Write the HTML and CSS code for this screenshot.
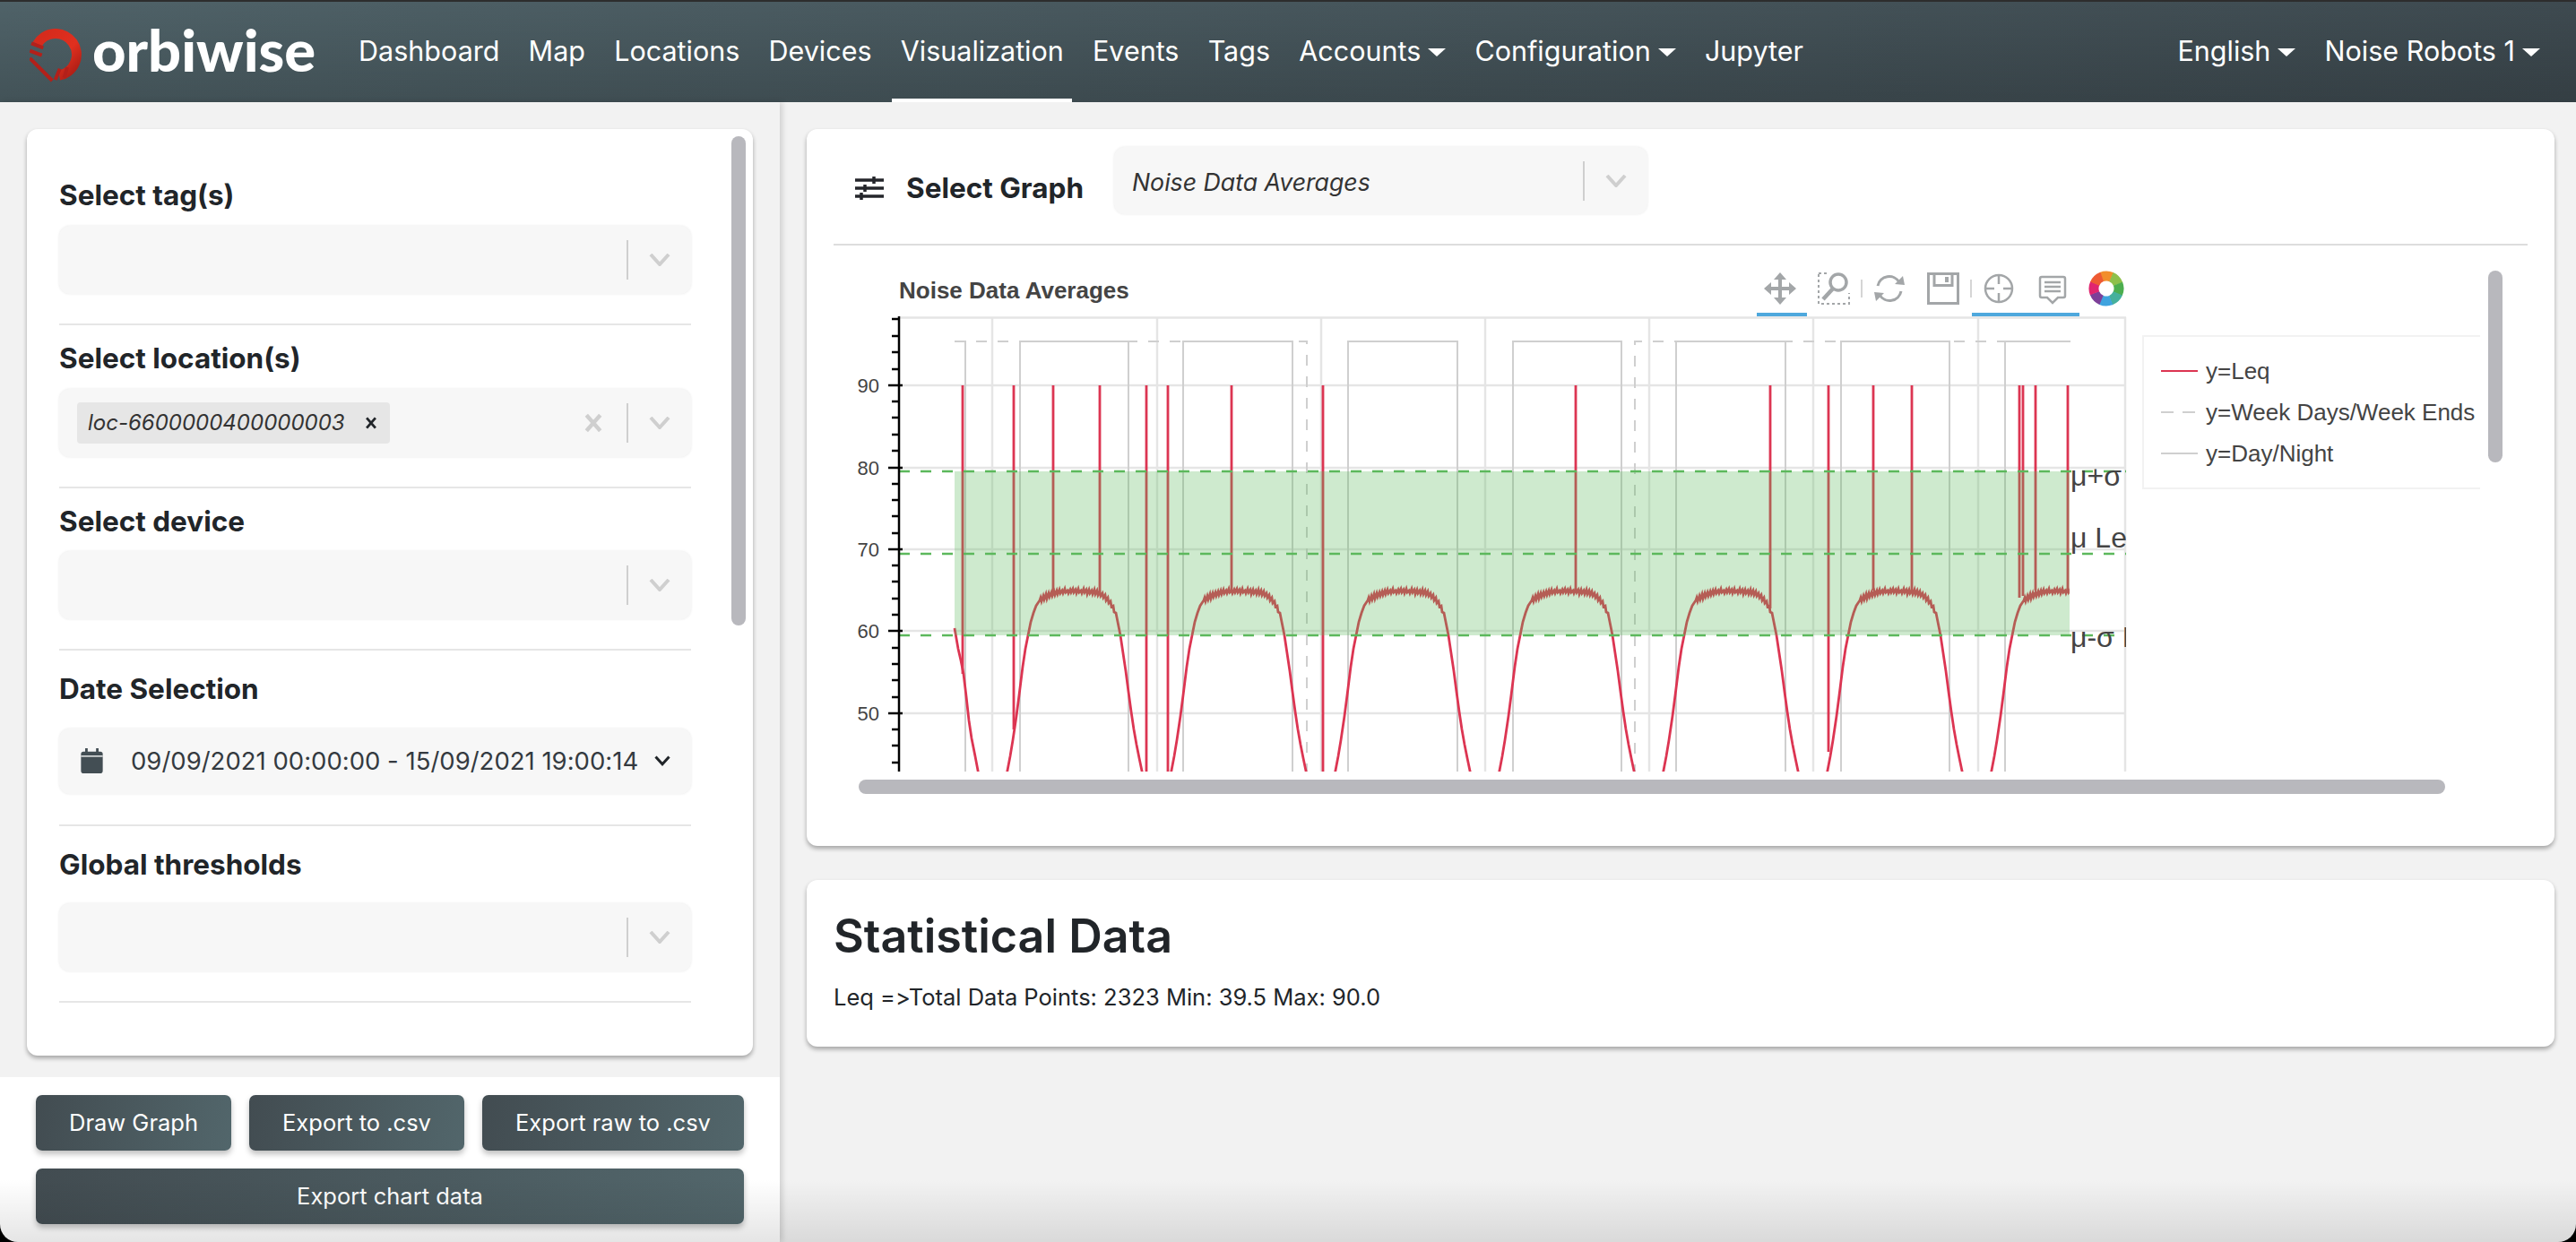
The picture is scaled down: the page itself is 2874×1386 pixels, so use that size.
FILE: index.html
```html
<!DOCTYPE html>
<html>
<head lang="en">
    <meta charset="UTF-8">
    <title>orbiwise - Visualization</title>
    <link rel="stylesheet" href="styles.css">
</head>
<body>
    <svg class="defs">
        <symbol id="chev" viewBox="0 0 24 14"><path d="M2 1 L12 12 L22 1" fill="none" stroke="currentColor" stroke-width="4"/></symbol>
        <symbol id="cross" viewBox="0 0 20 20"><path d="M3 2 L17 18 M17 2 L3 18" fill="none" stroke="currentColor" stroke-width="4"/></symbol>
    </svg>

    <nav class="navbar">
        <a class="brand" href="#">
            <svg class="brand-ring" viewBox="0 0 60 60">
                <defs>
                    <linearGradient id="ringFill" x1="0" y1="0" x2="1" y2="1">
                        <stop offset="0" stop-color="#d42a1c"/>
                        <stop offset=".6" stop-color="#e0301f"/>
                        <stop offset="1" stop-color="#a81c14"/>
                    </linearGradient>
                </defs>
                <path d="M8.600 17.200A23.500 23.500 0 1 1 33.100 52.100" fill="none" stroke="url(#ringFill)" stroke-width="11"/>
                <path d="M2 16.300L15.300 21.300M.3 24.700L13.700 29.700M.3 33L25.300 58M28.700 57L33.700 44.700M38.700 54.700L42 43" fill="none" stroke="#b3201a" stroke-width="4"/>
            </svg>
            <span class="brand-name">orbiwise</span>
        </a>
        <ul class="nav-list">
            <li class="nav-item"><a href="#">Dashboard</a></li>
            <li class="nav-item"><a href="#">Map</a></li>
            <li class="nav-item"><a href="#">Locations</a></li>
            <li class="nav-item"><a href="#">Devices</a></li>
            <li class="nav-item active"><a href="#">Visualization</a></li>
            <li class="nav-item"><a href="#">Events</a></li>
            <li class="nav-item"><a href="#">Tags</a></li>
            <li class="nav-item"><a class="caret" href="#">Accounts</a></li>
            <li class="nav-item"><a class="caret" href="#">Configuration</a></li>
            <li class="nav-item"><a href="#">Jupyter</a></li>
        </ul>
        <ul class="nav-list nav-right">
            <li class="nav-item"><a class="caret" href="#">English</a></li>
            <li class="nav-item"><a class="caret" href="#">Noise Robots 1</a></li>
        </ul>
    </nav>

    <div class="page">
        <aside class="sidebar">
            <div class="filter-card">
                <div class="scroll-y filter-scroll"></div>

                <div class="field first">
                    <h5>Select tag(s)</h5>
                    <div class="select">
                        <span class="select-value"></span>
                        <span class="select-sep"></span>
                        <svg class="chev"><use href="#chev"/></svg>
                    </div>
                </div>
                <div class="field">
                    <h5>Select location(s)</h5>
                    <div class="select">
                        <span class="select-value">
                            <span class="chip">loc-6600000400000003<svg class="chip-x"><use href="#cross"/></svg></span>
                        </span>
                        <svg class="clear-x"><use href="#cross"/></svg>
                        <span class="select-sep"></span>
                        <svg class="chev"><use href="#chev"/></svg>
                    </div>
                </div>
                <div class="field">
                    <h5>Select device</h5>
                    <div class="select">
                        <span class="select-value"></span>
                        <span class="select-sep"></span>
                        <svg class="chev"><use href="#chev"/></svg>
                    </div>
                </div>
                <div class="field date">
                    <h5>Date Selection</h5>
                    <div class="select date-select">
                        <svg class="calendar" viewBox="0 0 26 30">
                            <path d="M5 0h3v4h10V0h3v4h2a3 3 0 0 1 3 3v20a3 3 0 0 1-3 3H3a3 3 0 0 1-3-3V7a3 3 0 0 1 3-3h2z" fill="#434e54"/>
                            <path d="M0 9.500h26" stroke="#f7f7f7" stroke-width="1.500"/>
                        </svg>
                        <span class="date-text">09/09/2021 00:00:00 - 15/09/2021 19:00:14</span>
                        <svg class="chev date-chev"><use href="#chev"/></svg>
                    </div>
                </div>
                <div class="field global">
                    <h5>Global thresholds</h5>
                    <div class="select">
                        <span class="select-value"></span>
                        <span class="select-sep"></span>
                        <svg class="chev"><use href="#chev"/></svg>
                    </div>
                </div>
            </div>

            <div class="actions">
                <div class="action-row">
                    <button class="btn btn-draw">Draw Graph</button>
                    <button class="btn btn-csv">Export to .csv</button>
                    <button class="btn btn-raw">Export raw to .csv</button>
                </div>
                <button class="btn btn-wide">Export chart data</button>
            </div>
        </aside>

        <main class="main">
            <section class="card graph-card">
                <div class="graph-head">
                    <svg class="sliders" viewBox="0 0 32 26">
                        <path d="M0 4h32M0 13h32M0 22h32" stroke="#24262b" stroke-width="3.500"/>
                        <path d="M21 0v8M11 9v8M7 18v8" stroke="#24262b" stroke-width="3.500"/>
                    </svg>
                    <h5>Select Graph</h5>
                    <div class="select graph-select">
                        <span class="select-value graph-value">Noise Data Averages</span>
                        <span class="select-sep"></span>
                        <svg class="chev"><use href="#chev"/></svg>
                    </div>
                </div>

                <div class="chart-wrap">
                    <div class="chart-head">
                        <span class="chart-title">Noise Data Averages</span>
                        <div class="toolbar">
                            <span class="tool on first-tool">
                                <svg viewBox="0 0 36 36"><path d="M18 0l7 8h-5v8h8v-5l8 7-8 7v-5h-8v8h5l-7 8-7-8h5v-8H8v5l-8-7 8-7v5h8V8h-5z" fill="#a3a6a8"/></svg>
                            </span>
                            <span class="tool">
                                <svg viewBox="0 0 36 36"><path d="M1 1h34v34H1z" fill="none" stroke="#a3a6a8" stroke-width="2" stroke-dasharray="3 3"/><rect x="10" y="-1" width="27" height="24" fill="#fff"/><circle cx="23" cy="11" r="9" fill="none" stroke="#a3a6a8" stroke-width="3.500"/><path d="M17 18L6 30" stroke="#a3a6a8" stroke-width="4.500"/></svg>
                            </span>
                            <span class="tool-sep"></span>
                            <span class="tool">
                                <svg viewBox="0 0 36 36"><path d="M5 15A13 13 0 0 1 29 11M31 21A13 13 0 0 1 7 25" fill="none" stroke="#a3a6a8" stroke-width="3"/><path d="M24 13l11 1 -2-10zM12 23L1 22l2 10z" fill="#a3a6a8"/></svg>
                            </span>
                            <span class="tool">
                                <svg viewBox="0 0 36 36"><path d="M1.500 1.500h33v33h-33zM8 1.500v13h20v-13" fill="none" stroke="#a3a6a8" stroke-width="3"/><rect x="20" y="5" width="4" height="6" fill="#a3a6a8"/></svg>
                            </span>
                            <span class="tool-sep"></span>
                            <span class="tool on">
                                <svg viewBox="0 0 36 36"><circle cx="18" cy="18" r="15" fill="none" stroke="#a3a6a8" stroke-width="2.500"/><path d="M18 2v11M18 23v11M2 18h11M23 18h11" stroke="#a3a6a8" stroke-width="2.500"/></svg>
                            </span>
                            <span class="tool on">
                                <svg viewBox="0 0 36 36"><path d="M6 5h24a2 2 0 0 1 2 2v19a2 2 0 0 1-2 2h-6l-6 6-6-6H6a2 2 0 0 1-2-2V7a2 2 0 0 1 2-2z" fill="none" stroke="#a3a6a8" stroke-width="2.500"/><path d="M9 11h18M9 16h18M9 21h18" stroke="#a3a6a8" stroke-width="2.500"/></svg>
                            </span>
                            <span class="tool logo">
                                <svg viewBox="0 0 40 40">
                                    <g fill="none" stroke-width="11" transform="rotate(-112 20 20)">
                                        <circle cx="20" cy="20" r="14" pathLength="8" stroke-dasharray="1.050 6.950" stroke="#f28e2b"/>
                                        <circle cx="20" cy="20" r="14" pathLength="8" stroke-dasharray="1.050 6.950" stroke-dashoffset="-1" stroke="#8ec04b"/>
                                        <circle cx="20" cy="20" r="14" pathLength="8" stroke-dasharray="1.050 6.950" stroke-dashoffset="-2" stroke="#4cae4f"/>
                                        <circle cx="20" cy="20" r="14" pathLength="8" stroke-dasharray="1.050 6.950" stroke-dashoffset="-3" stroke="#45b09c"/>
                                        <circle cx="20" cy="20" r="14" pathLength="8" stroke-dasharray="1.050 6.950" stroke-dashoffset="-4" stroke="#3fa3de"/>
                                        <circle cx="20" cy="20" r="14" pathLength="8" stroke-dasharray="1.050 6.950" stroke-dashoffset="-5" stroke="#7d3f98"/>
                                        <circle cx="20" cy="20" r="14" pathLength="8" stroke-dasharray="1.050 6.950" stroke-dashoffset="-6" stroke="#e0256f"/>
                                        <circle cx="20" cy="20" r="14" pathLength="8" stroke-dasharray="1.050 6.950" stroke-dashoffset="-7" stroke="#ee5a33"/>
                                    </g>
                                </svg>
                            </span>
                        </div>
                    </div>

                    <div class="chart-body">
                        <svg class="plot" viewBox="950 354 1425 508">
                            <defs>
                                <path id="leqDay" d="M1123 866L1127 845 1130 827 1134 800 1137 777 1141 745 1144 725 1147 710 1150 695 1153 685 1156 677 1160 671 1161 668 1162 672 1164 666 1165 670 1167 664 1168 669 1170 663 1171 667 1173 662 1174 666 1176 661 1177 665 1179 660 1180 664 1182 659 1183 663 1185 660 1186 663 1188 658 1189 662 1191 660 1192 663 1194 659 1195 662 1197 658 1198 662 1200 659 1201 663 1203 658 1204 662 1206 660 1207 663 1209 658 1210 662 1212 659 1213 664 1215 659 1216 663 1218 660 1219 664 1221 659 1222 664 1224 660 1225 665 1227 661 1228 666 1230 663 1231 668 1233 665 1234 671 1236 668 1237 674 1239 672 1240 678 1242 677 1243 684 1245 685 1247 695 1250 710 1253 730 1256 750 1259 773 1262 795 1265 815 1268 832 1271 847 1275 866"/>
                                <clipPath id="lastDay"><rect x="950" y="354" width="1359" height="508"/></clipPath>
                                <clipPath id="frameClip"><rect x="950" y="354" width="1422" height="508"/></clipPath>
                            </defs>

                            <path class="grid" d="M1003 355.500H2372M1003 431H2372M1003 523H2372M1003 614H2372M1003 705H2372M1003 797H2372M1107 355V862M1291 355V862M1474 355V862M1657 355V862M1840 355V862M2023 355V862M2207 355V862M2371 355V862"/>

                            <path class="day-night" d="M1065 382H1077V866M1138 866V382H1259V866M1320 866V382H1442V866M1504 866V382H1626V866M1688 866V382H1809V866M1870 866V382H1992V866M2054 866V382H2175V866M2237 866V382H2309"/>
                            <path class="week-days" d="M1065 382H1458V866M1824 866V382H2310"/>

                            <g class="leq">
                                <path d="M1065 702L1069 725 1072 738 1075 753 1078 778 1081 805 1084 825 1088 845 1092 866"/>
                                <use href="#leqDay"/>
                                <use href="#leqDay" x="183"/>
                                <use href="#leqDay" x="366"/>
                                <use href="#leqDay" x="549"/>
                                <use href="#leqDay" x="732"/>
                                <use href="#leqDay" x="915"/>
                                <g clip-path="url(#lastDay)"><use href="#leqDay" x="1098"/></g>
                                <path d="M1074 431V753M1131 431V815M1175 431V662M1227 431V661M1279 431V866M1303 431V866M1374 431V660M1476 431V866M1758 431V660M1975 431V680M2040 431V840M2090 431V660M2133 431V660M2253 431V668M2257 431V666M2271 431V660M2307 431V660"/>
                            </g>

                            <rect class="band" x="1065" y="527" width="1244" height="183"/>
                            <path class="band-line" d="M1003 527H2372M1003 619H2372M1003 710H2372"/>

                            <path class="axis" d="M1003 354V862"/>
                            <path class="axis" d="M991 431H1007M991 523H1007M991 614H1007M991 705H1007M991 797H1007"/>
                            <path class="axis" d="M995 357H1003M995 376H1003M995 394H1003M995 413H1003M995 449H1003M995 467H1003M995 486H1003M995 504H1003M995 541H1003M995 559H1003M995 577H1003M995 596H1003M995 632H1003M995 650H1003M995 669H1003M995 687H1003M995 724H1003M995 742H1003M995 760H1003M995 779H1003M995 815H1003M995 833H1003M995 852H1003"/>

                            <g class="axis-label">
                                <text x="981" y="439">90</text>
                                <text x="981" y="531">80</text>
                                <text x="981" y="622">70</text>
                                <text x="981" y="713">60</text>
                                <text x="981" y="805">50</text>
                            </g>
                            <g class="band-label" clip-path="url(#frameClip)">
                                <text x="2310" y="543">μ+σ Leq</text>
                                <text x="2310" y="612">μ Leq</text>
                                <text x="2310" y="723">μ-σ Leq</text>
                            </g>
                        </svg>

                        <div class="legend">
                            <div class="legend-row"><span class="swatch swatch-leq"></span>y=Leq</div>
                            <div class="legend-row"><span class="swatch swatch-week"></span>y=Week Days/Week Ends</div>
                            <div class="legend-row"><span class="swatch swatch-day"></span>y=Day/Night</div>
                        </div>
                    </div>

                    <div class="scroll-y chart-scroll-y"></div>
                    <div class="scroll-x"></div>
                </div>
            </section>

            <section class="card stats-card">
                <h2>Statistical Data</h2>
                <p>Leq =&gt;Total Data Points: 2323 Min: 39.5 Max: 90.0</p>
            </section>
        </main>
    </div>

    <div class="window-edge"></div>
</body>
</html>
```

FILE: styles.css
```css
*{
    padding: 0;
    margin: 0;
    box-sizing: border-box;
}
html, body{
    width: 2874px;
    height: 1386px;
    overflow: hidden;
}
body{
    position: relative;
    background: #f2f2f2;
    color: #212529;
    font-family: Inter, "Liberation Sans", sans-serif;
    font-feature-settings: "calt" 0;
}
a{
    text-decoration: none;
    color: inherit;
}
ul{
    list-style: none;
}
.defs{
    position: absolute;
    width: 0;
    height: 0;
}

/* top bar */
.navbar{
    height: 114px;
    display: flex;
    align-items: stretch;
    border-top: 2px solid #2d2d2d;
    padding-left: 33px;
    padding-right: 24px;
    color: #fff;
    background: linear-gradient(to bottom, rgba(0,0,0,0), rgba(0,0,0,.16)), linear-gradient(90deg, #4f6268, #3e4a50);
}
.brand{
    display: flex;
    align-items: center;
    width: 351px;
}
.brand-ring{
    width: 60px;
    height: 60px;
    margin-top: 8px;
}
.brand-name{
    margin-left: 10px;
    font-family: Lato, sans-serif;
    font-weight: 900;
    font-size: 65px;
    line-height: 1;
    margin-top: -6px;
}
.nav-list{
    display: flex;
}
.nav-right{
    margin-left: auto;
}
.nav-item{
    display: flex;
    align-items: center;
    margin: 0 6.600px;
    padding: 0 9.500px;
    font-size: 30.500px;
    border-bottom: 4px solid transparent;
    white-space: nowrap;
}
.nav-item.active{
    border-bottom-color: #fff;
}
.caret::after{
    content: "";
    display: inline-block;
    margin-left: 8px;
    vertical-align: 5px;
    border-top: 9px solid #fff;
    border-left: 10px solid transparent;
    border-right: 10px solid transparent;
}

.page{
    display: flex;
    height: 1272px;
}

/* left column */
.sidebar{
    width: 870px;
    flex: none;
    padding-top: 30px;
    display: flex;
    flex-direction: column;
    box-shadow: 3px 0 6px rgba(0,0,0,.14);
}
.filter-card{
    position: relative;
    height: 1034px;
    margin: 0 30px;
    padding: 0 69px 0 36px;
    background: #fff;
    border-radius: 12px;
    box-shadow: 0 3px 5px rgba(0,0,0,.32);
}
.field{
    padding-bottom: 33px;
    border-bottom: 2.500px solid #e6e6e6;
}
.field.first{
    padding-top: 55px;
}
.field h5{
    font-size: 31.500px;
    line-height: 38px;
    font-weight: 700;
    padding-top: 18px;
    box-sizing: content-box;
    height: 38px;
    margin-bottom: 14.500px;
}
.field.first h5{
    padding-top: 0;
    margin-bottom: 15px;
}
.field.date{
    padding-bottom: 34px;
}
.field.date h5{
    padding-top: 23.500px;
    margin-bottom: 25px;
}
.field.global h5{
    padding-top: 24.500px;
    margin-bottom: 24px;
}
.select{
    display: flex;
    align-items: center;
    height: 76px;
    padding: 0 23px 0 20px;
    background: #f7f7f7;
    border-radius: 12px;
    box-shadow: 0 0 3px rgba(0,0,0,.09);
}
.select-value{
    flex: 1;
    display: flex;
    align-items: center;
}
.select-sep{
    width: 2px;
    height: 44px;
    background: #cfcfcf;
    margin: 0 23px 0 26px;
}
.chev{
    width: 24px;
    height: 14px;
    color: #cfcfcf;
}
.chip{
    display: flex;
    align-items: center;
    height: 46px;
    padding: 0 14px 0 12px;
    background: #e6e6e6;
    border-radius: 4px;
    font-size: 24px;
    font-style: italic;
    color: #333;
}
.chip-x{
    width: 14px;
    height: 14px;
    margin-left: 22px;
    color: #212529;
}
.clear-x{
    width: 22px;
    height: 22px;
    color: #cfcfcf;
}
.date-select{
    height: 73px;
    padding: 0 23px 0 24px;
}
.calendar{
    width: 25px;
    height: 28px;
    flex: none;
}
.date-text{
    margin-left: 31px;
    font-size: 27.500px;
    color: #343a40;
    white-space: nowrap;
}
.date-chev{
    width: 18px;
    height: 12px;
    margin-left: auto;
    color: #212529;
}

.scroll-y, .scroll-x{
    position: absolute;
    background: #b8b8bd;
    border-radius: 8px;
}
.filter-scroll{
    top: 8px;
    right: 8px;
    width: 16px;
    height: 546px;
}

.actions{
    margin-top: 24px;
    flex: 1;
    background: #fff;
    padding: 20px 40px;
}
.action-row{
    display: flex;
    gap: 20px;
    margin-bottom: 20px;
}
.btn{
    height: 62px;
    border: 0;
    border-radius: 7px;
    color: #fff;
    font-family: inherit;
    font-size: 25.500px;
    padding-bottom: 2px;
    background: linear-gradient(100deg, #424c51, #52666b);
    box-shadow: 0 4px 6px rgba(0,0,0,.25);
}
.btn-draw{
    width: 218px;
}
.btn-csv{
    width: 240px;
}
.btn-raw{
    width: 292px;
}
.btn-wide{
    width: 790px;
    display: block;
}

/* right column */
.main{
    flex: 1;
    padding: 30px 24px 0 30px;
}
.card{
    position: relative;
    background: #fff;
    border-radius: 12px;
    box-shadow: 0 3px 5px rgba(0,0,0,.32);
}
.graph-card{
    height: 800px;
    padding: 20px 30px 0;
    margin-bottom: 38px;
}
.graph-head{
    display: flex;
    align-items: center;
    height: 110px;
    padding-left: 24px;
    padding-bottom: 33px;
    border-bottom: 2.500px solid #ddd;
}
.sliders{
    width: 32px;
    height: 26px;
    margin-top: 16px;
}
.graph-head h5{
    margin-left: 25px;
    margin-top: 16px;
    font-size: 31.500px;
    font-weight: 700;
}
.graph-select{
    width: 595px;
    height: 75px;
    margin-left: 34px;
}
.graph-value{
    font-size: 26.700px;
    font-style: italic;
    color: #333;
    padding-top: 3px;
}
.chart-wrap{
    padding: 25px 0 0 20px;
}
.chart-head{
    display: flex;
    align-items: flex-start;
    width: 1422px;
    height: 54px;
    padding-left: 53px;
}
.chart-title{
    font-family: "Liberation Sans", sans-serif;
    font-weight: 700;
    font-size: 26px;
    line-height: 50px;
    color: #444;
}
.toolbar{
    display: flex;
    align-items: flex-start;
    margin-left: auto;
}
.tool{
    width: 60px;
    height: 54px;
    border-bottom: 4px solid transparent;
    display: flex;
    align-items: flex-start;
    justify-content: center;
    padding-top: 5px;
}
.tool svg{
    width: 36px;
    height: 36px;
}
.tool.on{
    border-bottom-color: #4ea8dd;
}
.first-tool{
    width: 56px;
    padding-right: 4px;
}
.tool-sep{
    width: 2px;
    height: 20px;
    background: #d5d5d5;
    margin-top: 13px;
}
.logo{
    width: 44px;
    margin-left: 8px;
    padding-top: 3px;
}
.logo svg{
    width: 40px;
    height: 40px;
}
.chart-body{
    display: flex;
    align-items: flex-start;
}
.plot{
    width: 1425px;
    height: 508px;
    flex: none;
}
.grid{
    fill: none;
    stroke: #e5e5e5;
    stroke-width: 2.500;
}
.day-night{
    fill: none;
    stroke: #cfcfcf;
    stroke-width: 2;
}
.week-days{
    fill: none;
    stroke: #cfcfcf;
    stroke-width: 2;
    stroke-dasharray: 12 12;
}
.leq path, .leq use{
    fill: none;
    stroke: #dc3552;
    stroke-width: 2.800;
}
.band{
    fill: #5cb85c;
    fill-opacity: .3;
}
.band-line{
    fill: none;
    stroke: #5cb85c;
    stroke-width: 2.500;
    stroke-dasharray: 12 12;
}
.axis{
    fill: none;
    stroke: #000;
    stroke-width: 2.500;
}
.axis-label text{
    font-family: "Liberation Sans", sans-serif;
    font-size: 22px;
    fill: #444;
    text-anchor: end;
}
.band-label text{
    font-family: "Liberation Sans", sans-serif;
    font-size: 32px;
    fill: #444;
}
.legend{
    width: 377px;
    height: 172px;
    margin: 21px 0 0 15px;
    border: 2px solid #f2f2f2;
    border-right: 0;
    display: flex;
    flex-direction: column;
    justify-content: center;
    font-family: "Liberation Sans", sans-serif;
    font-size: 26px;
    color: #444;
    white-space: nowrap;
    overflow: hidden;
}
.legend-row{
    height: 46px;
    display: flex;
    align-items: center;
    padding-left: 19px;
}
.swatch{
    width: 41px;
    height: 2.500px;
    margin-right: 9px;
    background: #dc3552;
}
.swatch-week{
    background: repeating-linear-gradient(90deg, #cfcfcf 0 14px, transparent 14px 24px);
}
.swatch-day{
    background: #cfcfcf;
}
.scroll-x{
    left: 58px;
    top: 726px;
    width: 1770px;
    height: 16px;
}
.chart-scroll-y{
    left: 1876px;
    top: 158px;
    width: 16px;
    height: 214px;
}
.stats-card{
    height: 186px;
    padding: 36px 30px 0;
}
.stats-card h2{
    font-size: 52px;
    line-height: 54px;
    font-weight: 600;
    margin-bottom: 23px;
}
.stats-card p{
    font-size: 25.500px;
    line-height: 36px;
}

/* bottom window shade and rounded corners of the capture */
.window-edge{
    position: absolute;
    left: 0;
    right: 0;
    bottom: 0;
    height: 70px;
    border-radius: 0 0 20px 20px;
    background: linear-gradient(to bottom, rgba(0,0,0,0), rgba(0,0,0,.1));
    box-shadow: 0 20px 0 20px #000;
    pointer-events: none;
}
```
